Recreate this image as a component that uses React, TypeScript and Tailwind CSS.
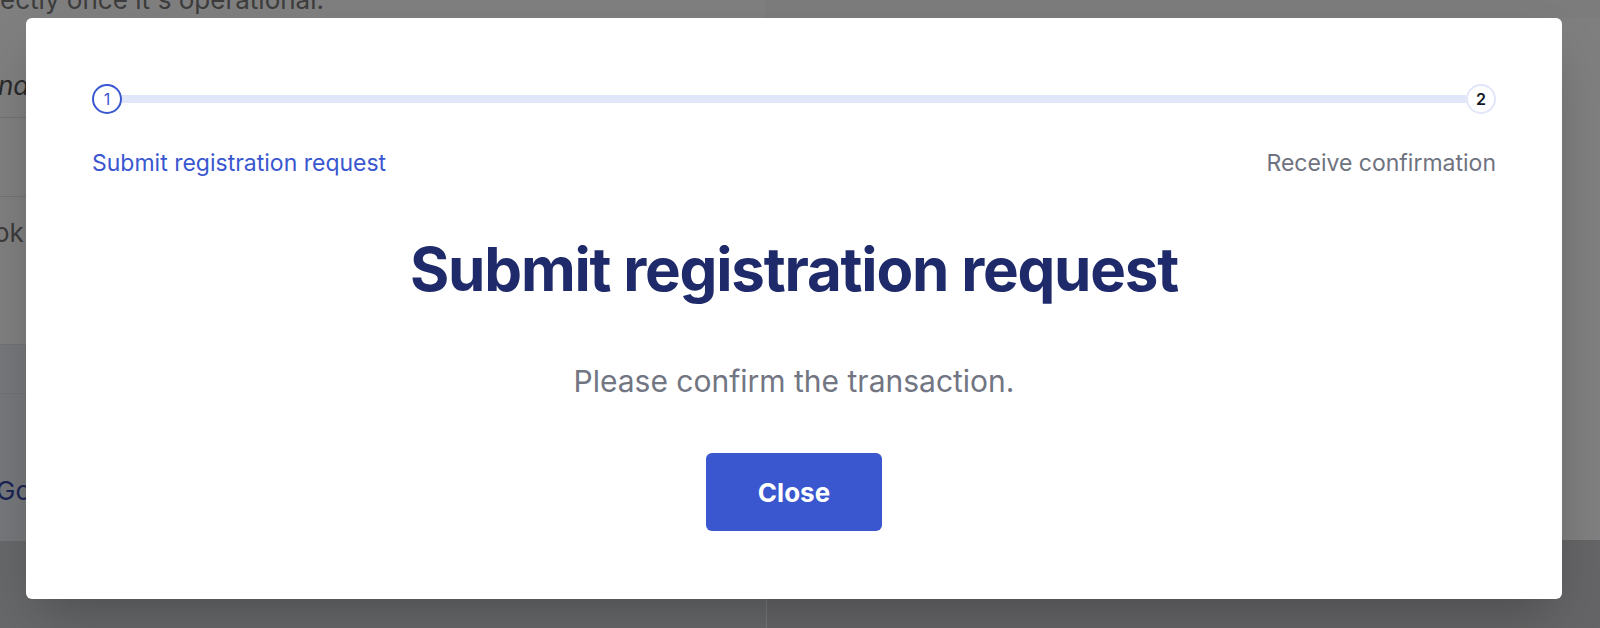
const FONT = "font-['Inter','Liberation_Sans',sans-serif]";

function BackgroundPage() {
  return (
    <div className="flex h-full">
      {/* left column of the page under the dialog */}
      <div className="w-[767px] border-r border-[#f2f2f2] flex flex-col">
        <p className="-mt-[17px] text-[26px] leading-[34px] text-[#7a7a7a] whitespace-nowrap">
          ectly once it&apos;s operational.
        </p>
        <div className="h-[101px] border-b border-[#e4e4e4] flex items-end pb-[14px]">
          <span className="-ml-[2px] text-[26px] leading-[34px] italic text-[#555]">na</span>
        </div>
        <div className="h-[79px] border-b border-[#e4e4e4]" />
        <div className="h-[72px] flex items-center">
          <span className="-ml-[6px] text-[26px] leading-[34px] text-[#777]">ok</span>
        </div>
        <div className="h-[75px]" />
        <div className="h-[50px] bg-[#eceef4] border-y border-[#e0e2e8]" />
        <div className="h-[147px] bg-[#eceef4] pt-[80px]">
          <span className="-ml-[4px] text-[26px] leading-[34px] text-[#3848a8]">Go</span>
        </div>
        <div className="flex-1 bg-[#cfd0d4]" />
      </div>
      <div className="flex-1 flex flex-col">
        <div className="h-[18px] bg-[#f8f8f8]" />
        <div className="flex-1 bg-white" />
        <div className="h-[88px] bg-[#cacbce]" />
      </div>
    </div>
  );
}

function Stepper() {
  return (
    <div>
      <div className="flex items-center">
        <div className="w-[30px] h-[30px] rounded-full border-2 border-[#3a57d0] bg-white flex items-center justify-center text-[16px] text-[#3a57d0] shrink-0">
          1
        </div>
        <div className="flex-1 h-[8px] bg-[#e1e6f8]" />
        <div className="w-[30px] h-[30px] rounded-full border-2 border-[#e1e6f8] bg-white flex items-center justify-center text-[16px] font-semibold text-[#111827] shrink-0">
          2
        </div>
      </div>
      <div className="flex justify-between mt-[35px] text-[23px] leading-[28px]">
        <span className="text-[#3a57d0]">Submit registration request</span>
        <span className="text-[#6f7380]">Receive confirmation</span>
      </div>
    </div>
  );
}

export default function App() {
  return (
    <div className={`relative h-[628px] w-full overflow-hidden bg-white ${FONT}`}>
      <BackgroundPage />

      <div className="absolute inset-0 bg-black/50 flex items-start pt-[18px] pl-[26px]">
        <div className="w-[1536px] h-[581px] bg-white rounded-[6px] shadow-2xl px-[66px] pt-[66px] flex flex-col">
          <Stepper />

          <h1 className="mt-[56px] text-center text-[60px] leading-[72px] font-bold tracking-[-0.02em] text-[#1e2a69]">
            Submit registration request
          </h1>

          <p className="mt-[58px] text-center text-[30px] leading-[36px] text-[#727582]">
            Please confirm the transaction.
          </p>

          <div className="mt-[54px] flex justify-center">
            <button
              type="button"
              className="w-[176px] h-[78px] rounded-[6px] bg-[#3a57cf] text-white text-[26px] font-bold flex items-center justify-center"
            >
              Close
            </button>
          </div>
        </div>
      </div>
    </div>
  );
}
